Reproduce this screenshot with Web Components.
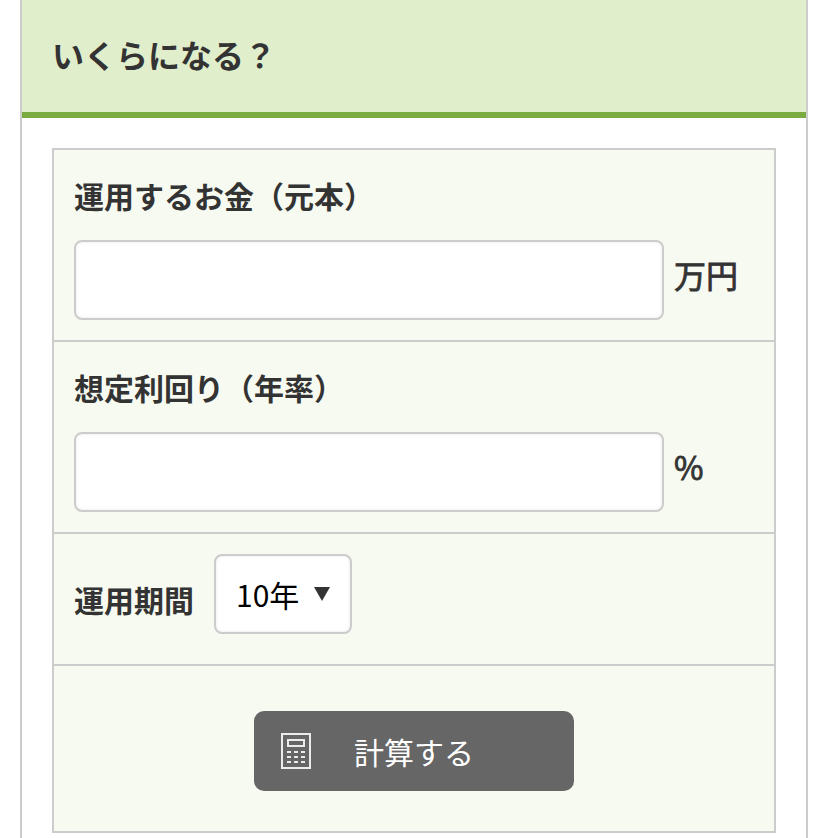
<!DOCTYPE html>
<html lang="ja">
<head>
<meta charset="utf-8">
<title>いくらになる？</title>
<style>
  body {
    margin: 0;
    background: #fff;
    color: #333;
    font-family: "Noto Sans CJK JP", sans-serif;
    font-size: 30px;
  }
</style>
</head>
<body>
<sim-card>
  <span slot="title">いくらになる？</span>
  <sim-row>
    <sim-field unit="万円">運用するお金（元本）</sim-field>
  </sim-row>
  <sim-row>
    <sim-field unit="%">想定利回り（年率）</sim-field>
  </sim-row>
  <sim-row>
    <sim-select value="10年">運用期間</sim-select>
  </sim-row>
  <sim-row>
    <sim-button>計算する</sim-button>
  </sim-row>
</sim-card>

<script>
class SimCard extends HTMLElement {
  constructor() {
    super();
    this.attachShadow({ mode: 'open' });
    this.shadowRoot.innerHTML = `
      <style>
        :host {
          display: block;
          box-sizing: border-box;
          height: 838px;
          margin: 0 20px;
          border: solid #ccc;
          border-width: 0 2px;
        }
        header {
          display: flex;
          align-items: center;
          height: 108px;
          padding: 0 30px 4px;
          border-bottom: 6px solid #7aab41;
          background: #e0eecb;
        }
        h2 {
          margin: 0;
          font-size: 32px;
          font-weight: 700;
          line-height: 48px;
        }
        .panel {
          margin: 30px 30px 0;
          border: 2px solid #ccc;
          background: #f7faf0;
        }
      </style>
      <header><h2><slot name="title"></slot></h2></header>
      <div class="panel"><slot></slot></div>
    `;
  }
}

class SimRow extends HTMLElement {
  constructor() {
    super();
    this.attachShadow({ mode: 'open' });
    this.shadowRoot.innerHTML = `
      <style>
        :host {
          display: block;
          padding: 20px;
          border-bottom: 2px solid #ccc;
        }
        :host(:last-child) {
          padding: 45px 20px 40px;
          border-bottom: 0;
        }
      </style>
      <slot></slot>
    `;
  }
}

class SimField extends HTMLElement {
  constructor() {
    super();
    this.attachShadow({ mode: 'open' });
    this.shadowRoot.innerHTML = `
      <style>
        :host {
          display: block;
        }
        label {
          display: block;
          height: 70px;
          font-weight: 700;
          line-height: 50px;
        }
        .line {
          display: flex;
          gap: 10px;
        }
        input {
          box-sizing: border-box;
          width: 590px;
          height: 80px;
          margin: 0;
          padding: 0 20px;
          border: 2px solid #ccc;
          border-radius: 8px;
          background: #fff;
          box-shadow: inset 0 0 3px rgba(0, 0, 0, .1);
          font: inherit;
        }
        .unit {
          font-size: 32px;
          line-height: 68px;
          -webkit-text-stroke: .8px #333;
        }
      </style>
      <label for="num"><slot></slot></label>
      <div class="line">
        <input id="num" type="text">
        <span class="unit">${this.getAttribute('unit')}</span>
      </div>
    `;
  }
}

class SimSelect extends HTMLElement {
  constructor() {
    super();
    this.attachShadow({ mode: 'open' });
    this.shadowRoot.innerHTML = `
      <style>
        :host {
          display: flex;
          gap: 20px;
          height: 90px;
        }
        .label {
          font-weight: 700;
          line-height: 90px;
        }
        .box {
          display: flex;
          align-items: center;
          justify-content: space-between;
          box-sizing: border-box;
          width: 138px;
          height: 80px;
          padding: 0 20px;
          border: 2px solid #ccc;
          border-radius: 8px;
          background: #fff;
          box-shadow: inset 0 0 3px rgba(0, 0, 0, .1);
          color: #000;
          line-height: 76px;
        }
        svg {
          display: block;
          width: 16px;
          height: 14px;
        }
      </style>
      <span class="label"><slot></slot></span>
      <div class="box">
        <span>${this.getAttribute('value')}</span>
        <svg viewBox="0 0 16 14"><path d="M0 0h16L8 14z" fill="#333"/></svg>
      </div>
    `;
  }
}

class SimButton extends HTMLElement {
  constructor() {
    super();
    this.attachShadow({ mode: 'open' });
    this.shadowRoot.innerHTML = `
      <style>
        :host {
          display: block;
        }
        button {
          display: flex;
          align-items: center;
          gap: 43px;
          width: 320px;
          height: 80px;
          margin: 0 auto;
          padding: 0 0 0 27px;
          border: 0;
          border-radius: 10px;
          background: #666;
          color: #fff;
          font: inherit;
          line-height: 80px;
        }
        svg {
          display: block;
          width: 30px;
          height: 36px;
        }
      </style>
      <button type="button">
        <svg viewBox="0 0 30 36" fill="none" stroke="#ebebeb">
          <rect x="1" y="1" width="28" height="34" stroke-width="2"/>
          <rect x="7" y="7" width="16" height="6" stroke-width="2"/>
          <path d="M6 19h18M6 24h18M6 29h18" stroke-width="2" stroke-dasharray="4 3"/>
        </svg>
        <span><slot></slot></span>
      </button>
    `;
  }
}

customElements.define('sim-card', SimCard);
customElements.define('sim-row', SimRow);
customElements.define('sim-field', SimField);
customElements.define('sim-select', SimSelect);
customElements.define('sim-button', SimButton);
</script>
</body>
</html>
